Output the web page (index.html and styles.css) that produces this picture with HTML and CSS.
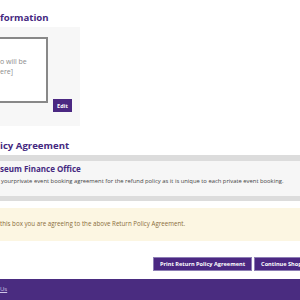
FILE: index.html
```
<!DOCTYPE html>
<html lang="en">
<head>
    <meta charset="UTF-8">
    <meta name="viewport" content="width=device-width, initial-scale=1.0">
    <title>Return Policy Agreement</title>
    <link rel="stylesheet" href="styles.css">
</head>
<body>

    <!-- Info block -->
    <h2 class="section-title first">formation</h2>
    <div class="info-panel">
        <div class="info-box">o will be<br>ere]</div>
        <button class="btn btn-small">Edit</button>
    </div>

    <!-- Return policy -->
    <h2 class="section-title">icy Agreement</h2>
    <div class="bar"></div>
    <div class="policy">
        <h3>seum Finance Office</h3>
        <p>yourprivate event booking agreement for the refund policy as it is unique to each private event booking.</p>
    </div>
    <div class="bar"></div>

    <div class="notice">this box you are agreeing to the above Return Policy Agreement.</div>

    <div class="actions">
        <button class="btn">Print Return Policy Agreement</button>
        <button class="btn">Continue Shopping</button>
    </div>

    <!-- Footer -->
    <div class="footer">
        <a href="#">Us</a>
    </div>

</body>
</html>
```

FILE: styles.css
```
body {
    margin: 0;
    background: #fff;
    font-family: "Open Sans", "DejaVu Sans", sans-serif;
    overflow: hidden;
    height: 300px;
}
.section-title {
    margin: 14px 0 0 0;
    font-size: 9.6px;
    line-height: 12px;
    font-weight: 700;
    color: #44287f;
}
.section-title.first {
    margin-top: 12px;
}
/* Info panel */
.info-panel {
    display: flex;
    align-items: flex-start;
    width: 80px;
    margin-top: 3px;
    padding: 10px 0 14px 0;
    background: #f7f7f7;
}
.info-box {
    width: 48px;
    height: 66px;
    padding-top: 18px;
    box-sizing: border-box;
    background: #fff;
    border: 2px solid #888;
    border-left: none;
    font-size: 7px;
    line-height: 10px;
    color: #8c8c8c;
}
.btn {
    font-family: "Open Sans", "DejaVu Sans", sans-serif;
    font-weight: 700;
    font-size: 5.6px;
    color: #fff;
    background: #4b2882;
    border: 1px solid #8d7eb5;
    padding: 0 6px;
    height: 14px;
    line-height: 12px;
    white-space: nowrap;
    cursor: pointer;
}
.btn-small {
    margin: 62px 0 0 5px;
    height: 13px;
    padding: 0 4px;
    border: none;
}
/* Policy */
.bar {
    height: 6px;
    background: #dcdcdc;
}
.section-title + .bar {
    margin-top: 3px;
}
.policy {
    background: #f6f6f6;
    padding: 3px 0 0 0;
    box-sizing: border-box;
    height: 35px;
}
.policy h3 {
    margin: 0;
    font-size: 8px;
    line-height: 10px;
    font-weight: 700;
    color: #44287f;
}
.policy p {
    margin: 3px 0 0 1px;
    font-size: 5.85px;
    line-height: 8px;
    color: #444;
    white-space: nowrap;
}
.policy + .bar {
    height: 5px;
}
/* Notice */
.notice {
    margin-top: 7px;
    height: 33px;
    line-height: 31px;
    background: #fcf6e2;
    color: #8a6d3b;
    font-size: 6.2px;
}
.actions {
    display: flex;
    gap: 2px;
    margin-top: 16px;
    padding-left: 153px;
    white-space: nowrap;
}
.footer {
    margin-top: 8px;
    height: 23px;
    background: #4a2c80;
    padding: 5px 0 0 0;
    box-sizing: border-box;
    font-size: 6px;
    line-height: 10px;
}
.footer a {
    color: #cfc6e6;
}
```
